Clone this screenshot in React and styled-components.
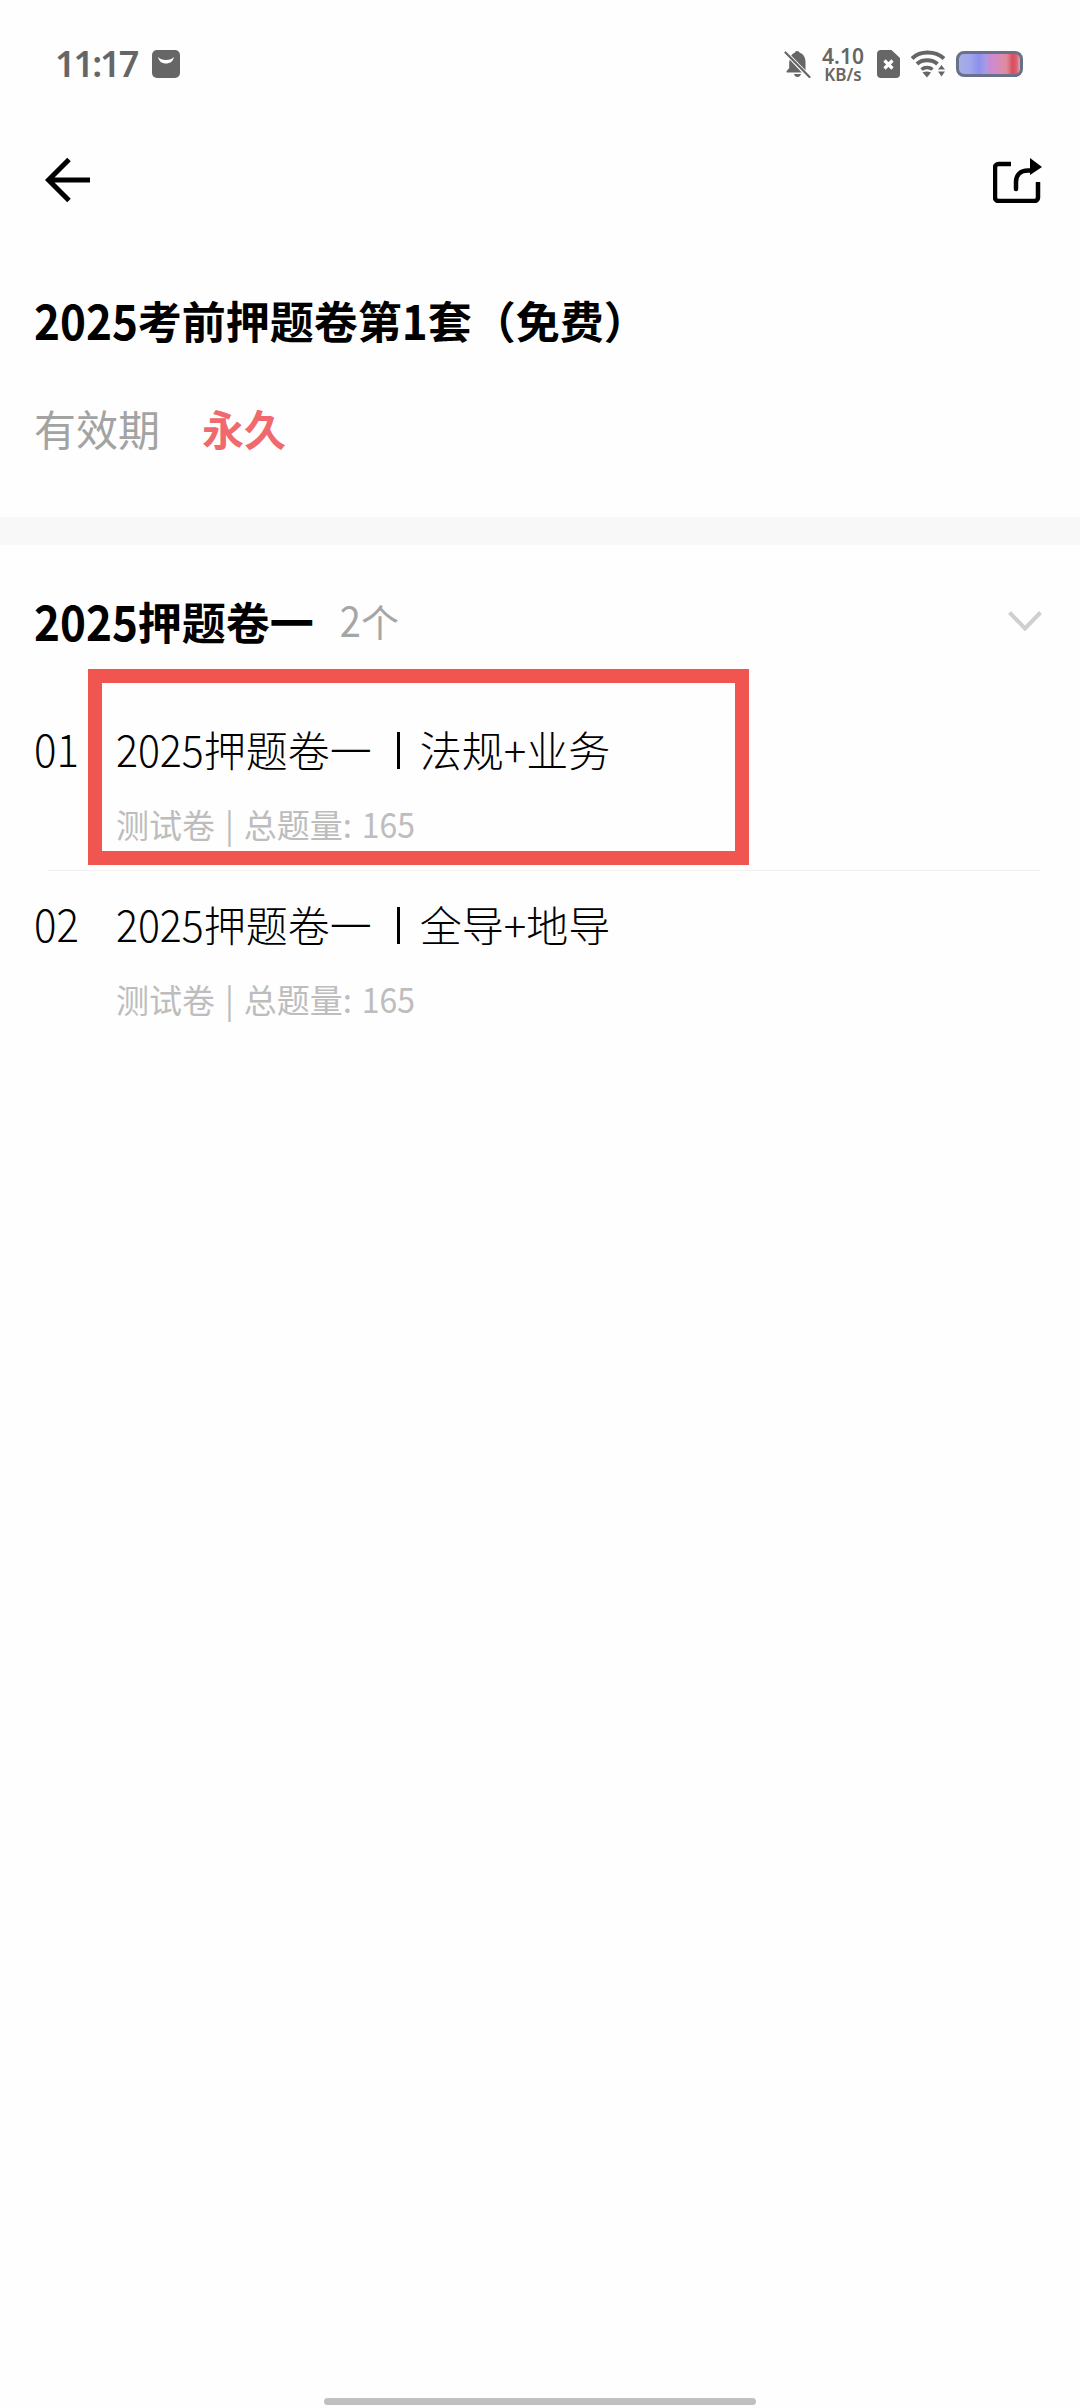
import React from "react";
import styled, { createGlobalStyle } from "styled-components";

const GlobalStyle = createGlobalStyle`
  html, body {
    margin: 0;
    padding: 0;
    background: #fefefe;
  }
  * {
    box-sizing: border-box;
  }
`;

const CJK = `"Noto Sans CJK SC", "Noto Sans", sans-serif`;

const Page = styled.div`
  width: 1080px;
  height: 2408px;
  position: relative;
  background: #fefefe;
  font-family: ${CJK};
  color: #000;
  overflow: hidden;
`;

const StatusBar = styled.div`
  height: 100px;
  padding: 47px 57px 0 55px;
  display: flex;
  justify-content: space-between;
  align-items: flex-start;
`;

const StatusLeft = styled.div`
  display: flex;
  align-items: center;
  gap: 17px;
  height: 34px;
`;

const Time = styled.span`
  width: 80px;
  font-family: "Noto Sans", sans-serif;
  font-size: 36px;
  font-weight: 600;
  line-height: 34px;
  letter-spacing: -2px;
  color: #666;
  white-space: nowrap;
`;

const StatusRight = styled.div`
  display: flex;
  align-items: center;
  height: 34px;
`;

const Speed = styled.div`
  width: 42px;
  margin: 0 13px 0 11px;
  display: flex;
  flex-direction: column;
  align-items: center;
  font-family: "Noto Sans", sans-serif;
  font-weight: 600;
  color: #666;
`;

const SpeedValue = styled.span`
  font-size: 21px;
  line-height: 21px;
  white-space: nowrap;
`;

const SpeedUnit = styled.span`
  font-size: 17px;
  line-height: 15px;
  white-space: nowrap;
`;

const Battery = styled.div`
  width: 67px;
  height: 26px;
  margin-left: 11px;
  border: 3px solid #69708a;
  border-radius: 8px;
  background: linear-gradient(
    90deg,
    #a6aee6 0%,
    #a0a6ea 18%,
    #8e90ee 32%,
    #a89ae4 44%,
    #cc8ad0 52%,
    #d88cb4 68%,
    #e08a9a 78%,
    #d84c60 88%,
    #d9606e 94%,
    #e4a4ac 100%
  );
`;

const NavBar = styled.div`
  height: 160px;
  padding: 0 38px 0 45px;
  display: flex;
  justify-content: space-between;
  align-items: center;
`;

const Summary = styled.div`
  padding: 30px 34px 59px;
`;

const Title = styled.h1`
  margin: 0;
  font-size: 44px;
  font-weight: 700;
  line-height: 60px;
`;

// the digits in the reference are taller and narrower than the CJK font's
const Tall = styled.span`
  display: inline-block;
  transform: scaleY(${({ $y }) => $y || 1.1});
  transform-origin: 50% 72%;
  font-size: ${({ $size }) => ($size ? `${$size}px` : "inherit")};
`;

const Meta = styled.div`
  margin-top: 48px;
  display: flex;
  align-items: center;
  line-height: 60px;
`;

const MetaLabel = styled.span`
  font-size: 42px;
  color: #a3a3a3;
`;

const MetaValue = styled.span`
  margin-left: 42px;
  font-size: 42px;
  font-weight: 700;
  color: #f0696f;
`;

const Band = styled.div`
  height: 28px;
  background: #f8f8f8;
`;

const SectionHead = styled.div`
  margin-top: 46px;
  padding: 0 38px 0 34px;
  height: 60px;
  display: flex;
  align-items: center;
`;

const SectionTitle = styled.span`
  font-size: 44px;
  font-weight: 700;
  line-height: 60px;
`;

const SectionCount = styled.span`
  margin-left: 26px;
  flex: 1;
  font-size: 38px;
  line-height: 60px;
  color: #a6a6a6;
`;

const List = styled.div`
  margin-top: 45px;
`;

const Row = styled.div`
  position: relative;
  height: 174px;
  padding: 23px 34px 0 34px;
  display: grid;
  grid-template-columns: 82px 1fr;
`;

const Num = styled.span`
  font-size: 42px;
  line-height: 60px;
  font-weight: 300;
`;

const RowBody = styled.div`
  display: flex;
  flex-direction: column;
`;

const RowTitle = styled.div`
  display: flex;
  align-items: center;
  font-size: 42px;
  font-weight: 300;
  line-height: 60px;
  white-space: nowrap;
`;

const Pipe = styled.span`
  width: 3px;
  height: 37px;
  margin: 2px 20px 0 25px;
  background: #000;
`;

const RowSub = styled.div`
  margin-top: 23px;
  font-size: 33px;
  line-height: 44px;
  word-spacing: 2.5px;
  color: #bdbdbd;
  white-space: nowrap;
`;

const Divider = styled.div`
  height: 1px;
  margin: 0 40px 0 48px;
  background: #f1f1f1;
`;

// red annotation frame drawn over the first row
const Highlight = styled.div`
  position: absolute;
  left: 88px;
  top: -27px;
  width: 661px;
  height: 196px;
  border: 14px solid #f0564f;
  pointer-events: none;
`;

const HomeBar = styled.div`
  position: absolute;
  left: 324px;
  bottom: 3px;
  width: 432px;
  height: 7px;
  border-radius: 4px;
  background: #c0c0c0;
`;

const BagIcon = () => (
  <svg width="28" height="28" viewBox="0 0 28 28">
    <rect width="28" height="28" rx="5" fill="#666" />
    <path d="M6 7c1 4.500 4 6.500 8 6.500S21 11.500 22 7c-1.800 2-4.500 3-8 3S7.800 9 6 7z" fill="#fff" />
  </svg>
);

const BellOffIcon = () => (
  <svg width="27" height="28" viewBox="0 0 27 28">
    <path
      d="M13 1c-1.200 0-2 .8-2.200 1.800C9.300 3.300 8 4.300 7.200 5.600L21.500 20.300V12c0-4.400-2-8-5.800-9.200C15.300 1.700 14.300 1 13 1zM5.800 9.700C5.400 10.900 5.200 11.900 5.200 13v5.200L2.600 21v1.500h15.200zM10 24c.4 1.800 1.700 3 3.500 3s3-1.200 3.500-3z"
      fill="#666"
    />
    <path d="M1.500 2.500L25.500 27" stroke="#666" strokeWidth="2.200" strokeLinecap="round" />
  </svg>
);

const SimIcon = () => (
  <svg width="23" height="28" viewBox="0 0 23 28" style={{ display: "block" }}>
    <path d="M4 0h10.500L23 8v16a4 4 0 0 1-4 4H4a4 4 0 0 1-4-4V4a4 4 0 0 1 4-4z" fill="#666" />
    <path d="M7.500 10.500l8 8M15.500 10.500l-8 8" stroke="#fff" strokeWidth="3.200" />
  </svg>
);

const WifiIcon = () => (
  <svg width="34" height="28" viewBox="0 0 34 28" style={{ display: "block", marginLeft: 11 }}>
    <path d="M1 8.500C9 .5 24 .5 33 8.500" fill="none" stroke="#666" strokeWidth="4" />
    <path d="M6 14C11 9 21 9 26.500 14" fill="none" stroke="#666" strokeWidth="4" />
    <path d="M10.500 19.500c3-2.600 8-2.600 11 0" fill="none" stroke="#666" strokeWidth="3.600" />
    <path d="M11.500 22.500c2.600-1.400 6-1.400 8.500 0L16 27.500z" fill="#666" />
    <path d="M30.500 15l3.500 4.500h-7zM27 21.500h7L30.500 26.500z" fill="#666" />
  </svg>
);

const BackIcon = () => (
  <svg width="46" height="46" viewBox="0 0 46 46" style={{ display: "block" }}>
    <path d="M24 2.500L3.500 23 24 43.500M3.500 23H45" fill="none" stroke="#000" strokeWidth="5" />
  </svg>
);

const ShareIcon = () => (
  <svg width="49" height="46" viewBox="0 0 49 46" style={{ display: "block" }}>
    <path
      d="M18 7H5.500A3.500 3.500 0 0 0 2 10.500v30A3.500 3.500 0 0 0 5.500 44h36a3.500 3.500 0 0 0 3.500-3.500V25"
      fill="none"
      stroke="#000"
      strokeWidth="4.500"
    />
    <path d="M23 32v-7c0-7 4.500-11.500 12-11.500h3" fill="none" stroke="#000" strokeWidth="4.500" strokeLinecap="round" />
    <path d="M37 1L49 10 37 18z" fill="#000" />
  </svg>
);

const ChevronIcon = () => (
  <svg width="34" height="20" viewBox="0 0 34 20" style={{ display: "block" }}>
    <path d="M1.500 1.500L17 17.500 32.500 1.500" fill="none" stroke="#cfcfcf" strokeWidth="4" />
  </svg>
);

const items = [
  { no: "01", right: "法规+业务", marked: true },
  { no: "02", right: "全导+地导" },
];

const App = () => {
  return (
    <Page>
      <GlobalStyle />
      <StatusBar>
        <StatusLeft>
          <Time>11:17</Time>
          <BagIcon />
        </StatusLeft>
        <StatusRight>
          <BellOffIcon />
          <Speed>
            <SpeedValue>4.10</SpeedValue>
            <SpeedUnit>KB/s</SpeedUnit>
          </Speed>
          <SimIcon />
          <WifiIcon />
          <Battery />
        </StatusRight>
      </StatusBar>

      <NavBar>
        <BackIcon />
        <ShareIcon />
      </NavBar>

      <Summary>
        <Title>
          <Tall>2025</Tall>考前押题卷第<Tall>1</Tall>套（免费）
        </Title>
        <Meta>
          <MetaLabel>有效期</MetaLabel>
          <MetaValue>永久</MetaValue>
        </Meta>
      </Summary>

      <Band />

      <SectionHead>
        <SectionTitle>
          <Tall>2025</Tall>押题卷一
        </SectionTitle>
        <SectionCount>
          <Tall>2</Tall>个
        </SectionCount>
        <ChevronIcon />
      </SectionHead>

      <List>
        {items.map((item, index) => (
          <React.Fragment key={item.no}>
            <Row>
              <Num>
                <Tall $y={1.08}>{item.no}</Tall>
              </Num>
              <RowBody>
                <RowTitle>
                  <Tall $y={1.08} $size={41}>2025</Tall>押题卷一
                  <Pipe />
                  {item.right}
                </RowTitle>
                <RowSub>
                  测试卷 | 总题量: <Tall $y={1.08} $size={32}>165</Tall>
                </RowSub>
              </RowBody>
              {item.marked && <Highlight />}
            </Row>
            {index < items.length - 1 && <Divider />}
          </React.Fragment>
        ))}
      </List>

      <HomeBar />
    </Page>
  );
};

export default App;
